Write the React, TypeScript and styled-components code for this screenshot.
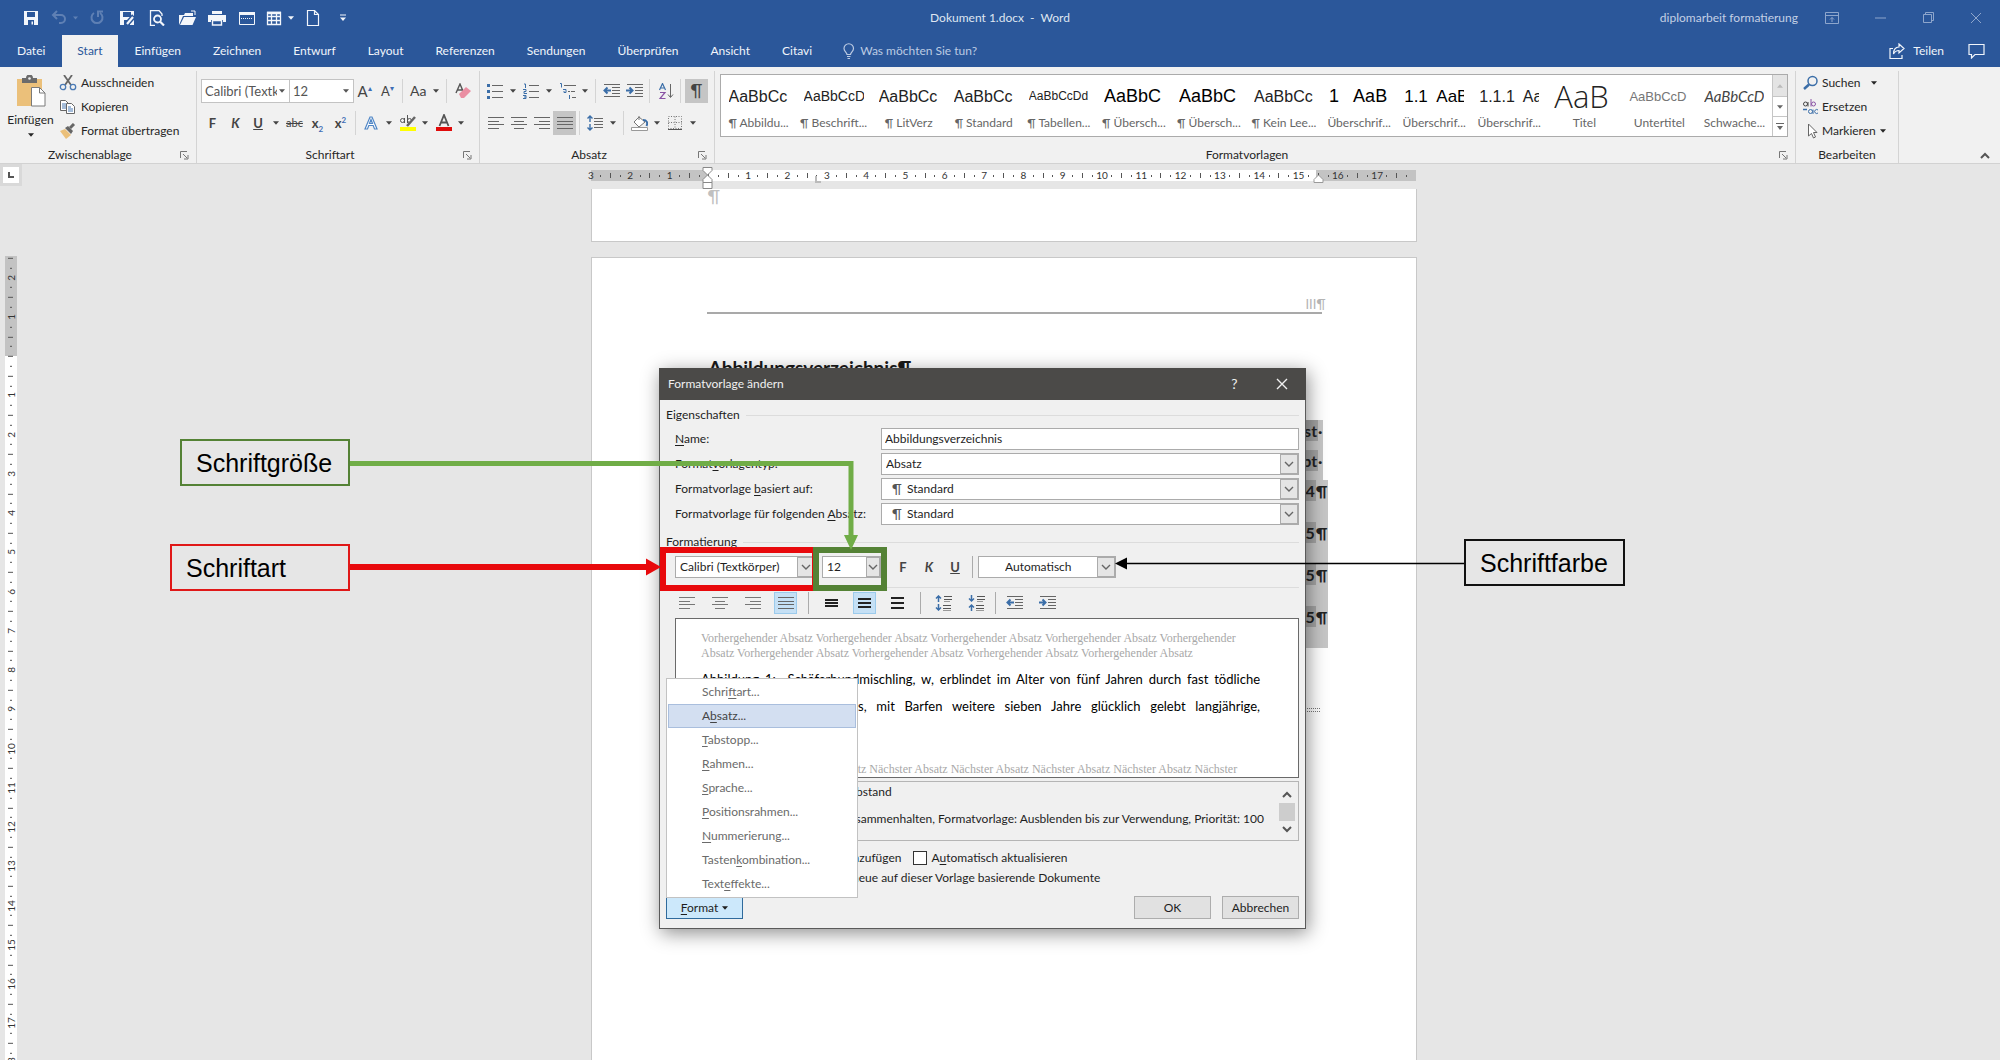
import React from "react";
import styled, { createGlobalStyle, css } from "styled-components";

const UI = `Lato, "Noto Sans", "Liberation Sans", sans-serif`;
const SANS = `"Liberation Sans", Arial, sans-serif`;
const BLUE = "#2b579a";

const Global = createGlobalStyle`
  *, *::before, *::after { box-sizing: border-box; }
  html, body { margin: 0; padding: 0; }
  body { font: 12px/16px ${UI}; color: #262626; background: #e6e6e6; }
  button, input, select { font: inherit; color: inherit; margin: 0; padding: 0; border: 0; background: none; border-radius: 0; }
  select { appearance: none; }
  svg { display: block; flex: none; }
  u { text-underline-offset: 2px; }
`;

const Shell = styled.div`
  height: 100vh;
  display: flex;
  flex-direction: column;
  overflow: hidden;
`;

/* ---------- title bar ---------- */
const TitleBar = styled.header`
  display: grid;
  grid-template-columns: 1fr auto 1fr;
  align-items: center;
  height: 35px;
  flex: none;
  background: ${BLUE};
  color: #dfe6f1;
`;
const QuickAccess = styled.div`
  display: flex;
  padding-left: 16px;
`;
const QuickButton = styled.button<{ $split?: boolean; $dim?: boolean }>`
  width: ${(p) => (p.$split ? 36 : 30)}px;
  height: 30px;
  display: flex;
  align-items: center;
  justify-content: center;
  gap: 6px;
  color: ${(p) => (p.$dim ? "#5f80b4" : "#f3f6fb")};
`;
const DocName = styled.div`
  white-space: pre;
`;
const WindowSide = styled.div`
  display: flex;
  justify-content: flex-end;
  align-items: center;
  color: #c3d0e5;
`;
const UserName = styled.span`
  margin-right: 10px;
`;
const WindowButton = styled.button`
  width: 48px;
  height: 32px;
  display: grid;
  place-items: center;
  color: #8ea6cc;
`;

/* ---------- tabs ---------- */
const TabBar = styled.nav`
  display: flex;
  align-items: stretch;
  gap: 2px;
  height: 32px;
  flex: none;
  padding-left: 2px;
  background: ${BLUE};
  color: #f1f5fb;
`;
const Tab = styled.button<{ $on?: boolean }>`
  padding: 0 15px;
  white-space: nowrap;
  ${(p) => p.$on && css`background: #f1f1f1; color: ${BLUE};`}
`;
const TellMe = styled.button`
  display: flex;
  align-items: center;
  gap: 5px;
  margin-left: 14px;
  color: #bccbe3;
`;
const TabRight = styled.div`
  margin-left: auto;
  display: flex;
  align-items: center;
  gap: 24px;
  padding-right: 15px;
`;
const ShareButton = styled.button`
  display: flex;
  align-items: center;
  gap: 8px;
`;

/* ---------- ribbon ---------- */
const Ribbon = styled.div`
  display: flex;
  height: 97px;
  flex: none;
  padding-top: 4px;
  background: #f1f1f1;
  border-bottom: 1px solid #d2d2d2;
`;
const Group = styled.section<{ $w?: number }>`
  ${(p) => (p.$w ? css`flex: 0 0 ${p.$w}px;` : css`flex: 1; min-width: 0;`)}
  display: flex;
  flex-direction: column;
  justify-content: space-between;
  border-right: 1px solid #d4d4d4;
`;
const GroupBody = styled.div<{ $top?: number; $left?: number; $col?: boolean }>`
  display: flex;
  flex-direction: ${(p) => (p.$col ? "column" : "row")};
  gap: ${(p) => (p.$col ? 8 : 0)}px;
  padding: ${(p) => p.$top ?? 0}px 0 0 ${(p) => p.$left ?? 4}px;
`;
const GroupLabel = styled.div`
  display: flex;
  align-items: center;
  height: 16px;
  & > span { flex: 1; text-align: center; }
  & > button { width: 16px; height: 12px; }
`;
const PasteButton = styled.button`
  width: 57px;
  height: 72px;
  padding-top: 4px;
  display: flex;
  flex-direction: column;
  align-items: center;
  gap: 5px;
`;
const Stack = styled.div`
  display: flex;
  flex-direction: column;
`;
const TextButton = styled.button`
  display: flex;
  align-items: center;
  gap: 4px;
  height: 24px;
  white-space: nowrap;
`;
const ToolRow = styled.div`
  display: flex;
  align-items: center;
  height: 24px;
`;
const Tool = styled.button<{ $split?: boolean; $on?: boolean }>`
  width: ${(p) => (p.$split ? 36 : 23)}px;
  height: 24px;
  display: flex;
  align-items: center;
  justify-content: ${(p) => (p.$split ? "space-between" : "center")};
  padding: ${(p) => (p.$split ? "0 4px 0 3px" : "0")};
  background: ${(p) => (p.$on ? "#c5c5c5" : "transparent")};
  color: #444;
`;
const Letter = styled.span<{ $size?: number; $kind?: "b" | "i" | "u" | "s" }>`
  font-size: ${(p) => p.$size ?? 13}px;
  line-height: 20px;
  text-align: center;
  min-width: 16px;
  font-weight: ${(p) => (p.$kind && p.$kind !== "s" ? 700 : 400)};
  font-style: ${(p) => (p.$kind === "i" ? "italic" : "normal")};
  text-decoration: ${(p) => (p.$kind === "u" ? "underline" : p.$kind === "s" ? "line-through" : "none")};
  & sup, & sub { font-size: 8px; line-height: 0; color: #3e6db5; }
`;
const Sep = styled.span`
  width: 1px;
  height: 24px;
  margin: 0 4px 0 3px;
  background: #d4d4d4;
`;
const RibbonCombo = styled.div<{ $w: number }>`
  position: relative;
  width: ${(p) => p.$w}px;
  height: 24px;
  margin-right: -1px;
  border: 1px solid #c3c3c3;
  background: #fff;
  color: #555;
  & select { width: 100%; height: 22px; padding: 0 12px 0 3px; font-size: 13px; }
  & svg { position: absolute; right: 4px; top: 9px; pointer-events: none; }
`;

/* ---------- style gallery ---------- */
const Gallery = styled.div`
  display: flex;
  height: 63px;
  margin: 3px 7px 0 5px;
  border: 1px solid #ababab;
  background: #fff;
`;
const GalleryItems = styled.div`
  flex: 1;
  min-width: 0;
  display: grid;
  grid-template-columns: repeat(14, minmax(0, 1fr));
  overflow: hidden;
`;
const StyleItem = styled.button`
  display: flex;
  flex-direction: column;
  align-items: center;
  min-width: 0;
  color: #666;
`;
const Sample = styled.span<{ $size: number; $light?: boolean; $grey?: boolean; $italic?: boolean; $heavy?: boolean }>`
  width: 60px;
  height: 40px;
  overflow: hidden;
  white-space: pre;
  text-align: left;
  font-family: ${(p) => (p.$light ? `"Open Sans", sans-serif` : p.$italic ? UI : SANS)};
  font-size: ${(p) => p.$size}px;
  line-height: 43px;
  font-weight: ${(p) => (p.$light ? 300 : 400)};
  font-style: ${(p) => (p.$italic ? "italic" : "normal")};
  color: ${(p) => (p.$grey ? "#767676" : p.$italic ? "#444" : p.$heavy ? "#000" : "#222")};
`;
const GalleryScroll = styled.div`
  width: 15px;
  display: grid;
  grid-template-rows: 22px 20px 1fr;
  border-left: 1px solid #c6c6c6;
  & button { display: grid; place-items: center; color: #666; border-bottom: 1px solid #c6c6c6; }
  & button:first-child { background: #e4e4e4; color: #bbb; }
  & button:last-child { border-bottom: 0; }
`;
const CollapseSide = styled.div`
  flex: 0 0 101px;
  display: flex;
  align-items: flex-end;
  justify-content: flex-end;
  padding: 0 10px 4px 0;
  color: #555;
`;

/* ---------- workspace ---------- */
const Workspace = styled.main`
  position: relative;
  flex: 1;
  min-height: 0;
  display: flex;
  padding-right: 15px;
  background: #e6e6e6;
  overflow: hidden;
`;
const RulerColumn = styled.div`
  flex: 0 0 22px;
  display: flex;
  flex-direction: column;
`;
const TabKind = styled.button`
  flex: none;
  width: 22px;
  height: 22px;
  display: grid;
  place-items: center;
  background: #d9d9d9;
  color: #555;
  & > span { width: 16px; height: 16px; background: #fff; display: grid; place-items: center; }
`;
const VRuler = styled.div`
  width: 12px;
  flex: 1;
  min-height: 0;
  margin: 70px 0 0 5px;
  background: linear-gradient(#c3c3c3 100px, #fff 100px);
`;
const VMarks = styled.div`
  display: flex;
  flex-direction: column;
  margin-top: -3px;
`;
const HRuler = styled.div`
  width: 825px;
  height: 11px;
  flex: none;
  position: relative;
  margin: 6px 0 8px;
  background: linear-gradient(90deg, #c3c3c3 116px, #fff 116px, #fff 725px, #c3c3c3 725px);
`;
const HMarks = styled.div`
  display: flex;
  width: 100%;
  margin-left: -5px;
`;
const Mark = styled.span<{ $kind: "num" | "tick" | "dot"; $v?: boolean }>`
  ${(p) => (p.$v ? css`height: calc(825px / 84); width: 12px; writing-mode: vertical-rl; transform: rotate(180deg);` : css`flex: 1 1 0; height: 11px;`)}
  flex-shrink: ${(p) => (p.$v ? 0 : 1)};
  display: flex;
  align-items: center;
  justify-content: center;
  min-width: 0;
  min-height: 0;
  font-size: 10px;
  line-height: 11px;
  color: #333;
  white-space: nowrap;
  &::before {
    content: "";
    display: ${(p) => (p.$kind === "num" ? "none" : "block")};
    background: #555;
    ${(p) => (p.$v
      ? css`height: 1px; width: ${p.$kind === "tick" ? 5 : 2}px;`
      : css`width: 1px; height: ${p.$kind === "tick" ? 5 : 2}px;`)}
  }
`;
const IndentHandle = styled.svg<{ $x: number; $y: number }>`
  position: absolute;
  left: ${(p) => p.$x}px;
  top: ${(p) => p.$y}px;
  z-index: 1;
`;
const Pages = styled.div`
  flex: 1;
  min-width: 0;
  display: flex;
  flex-direction: column;
  align-items: center;
`;
const Sheet = styled.article<{ $first?: boolean }>`
  width: 826px;
  background: #fff;
  border: 1px solid #c8c8c8;
  ${(p) => (p.$first
    ? css`flex: 0 0 53px; border-top: 0; margin-bottom: 15px; padding-left: 116px; font-size: 18px; line-height: 15px; color: #c0c0c0; overflow: hidden;`
    : css`flex: 1; border-bottom: 0;`)}
`;
const PageHeader = styled.div`
  height: 56px;
  margin: 0 94px 0 115px;
  padding-top: 38px;
  border-bottom: 2px solid #a9a9a9;
  text-align: right;
  font-size: 13px;
  color: #b4b4b4;
  & span { margin-right: -4px; }
`;
const PageTitle = styled.h1`
  margin: 42px 0 0 117px;
  font: 700 19px/24px ${UI};
  color: #1a1a1a;
`;
const Toc = styled.ol`
  list-style: none;
  margin: 40px 0 0 117px;
  padding: 0;
`;
const TocRow = styled.li<{ $tall?: boolean }>`
  display: flex;
  justify-content: flex-end;
  height: ${(p) => (p.$tall ? 42 : 30)}px;
  margin-right: ${(p) => (p.$tall ? 88 : 93)}px;
  background: #c6c6c6;
  font: 700 16px/22px ${UI};
  color: #222;
  & b { width: 24px; height: 21px; padding-right: 1px; text-align: right; background: #a3a3a3; font-weight: inherit; }
`;
const SectionEnd = styled.div`
  height: 4px;
  margin: 60px 96px 0 117px;
  border: dotted #777;
  border-width: 1px 0;
`;

/* ---------- floating layer: dialog and callouts, placed from the page centre ---------- */
const Floating = styled.div<{ $x: number; $y: number }>`
  position: absolute;
  left: calc(50% + ${(p) => p.$x}px);
  top: ${(p) => p.$y}px;
`;
const Dialog = styled(Floating)`
  width: 647px;
  height: 561px;
  background: #f0f0f0;
  border: 1px solid #5a5a5a;
  box-shadow: 2px 4px 18px rgba(0, 0, 0, 0.45);
  z-index: 2;
  color: #1e1e1e;
`;
const DialogTitle = styled.div`
  display: flex;
  align-items: center;
  height: 32px;
  margin: -1px -1px 0;
  padding: 0 1px 0 9px;
  background: #4b4a48;
  color: #f0f0f0;
  & > span { flex: 1; }
  & > button { width: 47px; display: grid; place-items: center; font-size: 14px; }
`;
const DialogBody = styled.div`
  padding: 7px 6px 0;
`;
const Legend = styled.div`
  display: flex;
  align-items: center;
  gap: 6px;
  height: 16px;
  &::after { content: ""; flex: 1; height: 1px; background: #dcdcdc; }
`;
const Fields = styled.div`
  display: grid;
  grid-template-columns: 206px 1fr;
  grid-auto-rows: 22px;
  row-gap: 3px;
  margin: 5px 0 9px 9px;
  & label { line-height: 22px; white-space: nowrap; }
  & > input { border: 1px solid #ababab; background: #fff; padding: 0 3px; }
`;
const Combo = styled.div<{ $w?: number; $pad?: number }>`
  position: relative;
  ${(p) => p.$w && css`width: ${p.$w}px;`}
  height: 22px;
  border: 1px solid #ababab;
  background: #fff;
  & select { width: 100%; height: 20px; padding: 0 18px 0 ${(p) => p.$pad ?? 4}px; }
  & > span { position: absolute; right: 0; top: 0; width: ${(p) => (p.$w && p.$w < 100 ? 14 : 18)}px; height: 20px; display: grid; place-items: center; background: #e5e5e5; border: 1px solid #ababab; color: #666; pointer-events: none; }
  & > i { position: absolute; left: 10px; top: 2px; font-style: normal; font-size: 14px; color: #555; }
`;
const FormatRow = styled.div`
  display: flex;
  align-items: center;
  gap: 6px;
  margin: 6px 0 0 9px;
`;
const FormatButtons = styled.div`
  display: flex;
  padding-left: 3px;
`;
const FormatButton = styled.button`
  width: 26px;
  height: 22px;
  color: #444;
`;
const RowSep = styled.span`
  width: 1px;
  height: 22px;
  margin: 0 -1px 0 -2px;
  background: #ababab;
`;
const AlignRow = styled.div`
  display: flex;
  align-items: center;
  gap: 10px;
  height: 31px;
  margin-top: 9px;
  padding-left: 9px;
  border-top: 1px solid #dcdcdc;
`;
const AlignButton = styled.button<{ $on?: boolean }>`
  width: 23px;
  height: 22px;
  display: grid;
  place-items: center;
  border: 1px solid ${(p) => (p.$on ? "#9ccbec" : "transparent")};
  background: ${(p) => (p.$on ? "#c5e0f5" : "transparent")};
`;
const AlignSep = styled.span<{ $tight?: boolean }>`
  width: 1px;
  height: 22px;
  margin: 0 ${(p) => (p.$tight ? -3 : 1)}px;
  background: #ababab;
`;
const Preview = styled.div`
  height: 160px;
  margin-left: 9px;
  padding: 12px 38px 0 25px;
  border: 1px solid #6a6a6a;
  background: #fff;
  overflow: hidden;
`;
const Ghost = styled.p<{ $end?: boolean }>`
  margin: ${(p) => (p.$end ? "42px 0 0" : "0")};
  padding-left: ${(p) => (p.$end ? 132 : 0)}px;
  font: 12px/15px "Liberation Serif", serif;
  color: #a8a8a8;
  white-space: nowrap;
`;
const Body = styled.p<{ $indent?: boolean }>`
  margin: ${(p) => (p.$indent ? "0" : "5px 0 0")};
  padding-left: ${(p) => (p.$indent ? 157 : 0)}px;
  font-size: 13px;
  line-height: 27px;
  text-align: justify;
  text-align-last: justify;
  white-space: nowrap;
  color: #000;
`;
const Description = styled.div`
  display: flex;
  height: 60px;
  margin: 3px 0 0 9px;
  border: 1px solid #b5b5b5;
`;
const DescriptionText = styled.div`
  flex: 1;
  min-width: 0;
  display: flex;
  flex-direction: column;
  gap: 9px;
  padding: 1px 14px 0 120px;
  line-height: 18px;
  white-space: nowrap;
  & div:first-child { padding-left: 52px; }
  & div:last-child { text-align: right; }
`;
const ScrollBar = styled.div`
  width: 20px;
  flex: none;
  display: flex;
  flex-direction: column;
  align-items: center;
  justify-content: space-between;
  padding: 9px 2px 7px 0;
  color: #555;
  & > span { width: 16px; height: 18px; background: #cdcdcd; }
`;
const CheckRow = styled.div<{ $last?: boolean }>`
  display: flex;
  align-items: center;
  height: 20px;
  margin-top: ${(p) => (p.$last ? 0 : 7)}px;
  padding-left: ${(p) => (p.$last ? 186 : 177)}px;
  white-space: nowrap;
  & label { display: flex; align-items: center; }
  & input { appearance: none; width: 14px; height: 14px; margin: 0 4px 0 12px; border: 1px solid #333; background: #fff; }
`;
const DialogFooter = styled.div`
  display: flex;
  gap: 11px;
  margin-top: 8px;
`;
const PushButton = styled.button<{ $hot?: boolean }>`
  width: 77px;
  height: 23px;
  border: 1px solid ${(p) => (p.$hot ? "#2f6a9c" : "#adadad")};
  background: ${(p) => (p.$hot ? "#cce8fb" : "#e1e1e1")};
  ${(p) => p.$hot && css`margin-right: auto; display: flex; align-items: center; justify-content: center; gap: 4px;`}
`;
const Menu = styled.ul`
  position: absolute;
  left: 6px;
  bottom: 30px;
  width: 192px;
  margin: 0;
  padding: 1px;
  list-style: none;
  background: #fff;
  border: 1px solid #c2c2c2;
  & button { display: block; width: 100%; height: 24px; padding-left: 33px; text-align: left; color: #6a6a6a; border: 1px solid transparent; }
`;
const HotItem = styled.li`
  & button { background: #d3dff1; border-color: #a9bedd; color: #444; }
`;
const Arrows = styled(Floating).attrs({ as: "svg" })`
  z-index: 3;
  pointer-events: none;
`;
const Callout = styled(Floating)<{ $w: number; $line: string }>`
  width: ${(p) => p.$w}px;
  height: 47px;
  padding-left: 14px;
  border: 2px solid ${(p) => p.$line};
  font: 25px/44px ${SANS};
  color: #000;
`;
const Frame = styled(Floating)<{ $w: number; $line: string }>`
  width: ${(p) => p.$w}px;
  height: 44px;
  border: 6px solid ${(p) => p.$line};
  z-index: 3;
  pointer-events: none;
`;

/* ---------- icons ---------- */
const Caret = ({ w = 7 }: { w?: number }) => (
  <svg width={w} height="4" viewBox="0 0 7 4"><path d="M0 0h7L3.5 4z" fill="currentColor" /></svg>
);
const Chevron = ({ up, heavy }: { up?: boolean; heavy?: boolean }) => (
  <svg width="10" height="7" viewBox="0 0 10 7">
    <path d={up ? "M1 6l4-4 4 4" : "M1 1l4 4 4-4"} fill="none" stroke="currentColor" strokeWidth={heavy ? 2 : 1.4} />
  </svg>
);
const Launcher = () => (
  <svg width="9" height="9" viewBox="0 0 9 9" fill="none" stroke="#777"><path d="M.5 7V.5H7M3 3l4 4M8 4v4H4" /></svg>
);
const I = ({ children, w = 16, h = 16 }: { children: React.ReactNode; w?: number; h?: number }) => (
  <svg width={w} height={h} viewBox={`0 0 ${w} ${h}`} fill="none" stroke="currentColor">{children}</svg>
);
type Rows = [number, number, number][];
const Lines = ({ rows, c = "#666", w = 16, sw = 1 }: { rows: Rows; c?: string; w?: number; sw?: number }) => (
  <I w={w}>{rows.map(([x, y, l], i) => <path key={i} d={`M${x} ${y}h${l}`} stroke={c} strokeWidth={sw} />)}</I>
);
const SaveIcon = ({ edit }: { edit?: boolean }) => (
  <I><path d="M1 1h14v14H1z" fill="currentColor" stroke="none" /><path d="M4 2h8v5H4zM5 10h6v5H5z" fill={BLUE} stroke="none" /><path d="M8.5 11.5h1.5v3H8.5z" fill="currentColor" stroke="none" />
    {edit && <><path d="M7 15L15 6" stroke={BLUE} strokeWidth="5" /><path d="M8 14l6-7" strokeWidth="2.2" /></>}
  </I>
);
const leftRows: Rows = [[0, 2.5, 16], [0, 6.5, 11], [0, 9.5, 16], [0, 13.5, 11]];
const centerRows: Rows = [[0, 2.5, 16], [3, 6.5, 10], [0, 9.5, 16], [3, 13.5, 10]];
const rightRows: Rows = [[0, 2.5, 16], [5, 6.5, 11], [0, 9.5, 16], [5, 13.5, 11]];
const justRows: Rows = [[0, 2.5, 16], [0, 6.5, 16], [0, 9.5, 16], [0, 13.5, 16]];
const Indent = ({ inward }: { inward?: boolean }) => (
  <I w={17}>
    <path d="M1 1.5h16M9 4.5h8M9 7.5h8M9 10.5h8M1 13.5h16" stroke="#666" />
    <path d={inward ? "M0 7.5h6M3.500 4.500l3 3-3 3" : "M8 7.5H2M4.500 4.500l-3 3 3 3"} stroke="#3b6ea8" strokeWidth="2" />
  </I>
);
const ParaGap = ({ closer }: { closer?: boolean }) => (
  <I w={17}>
    <path d="M9 1.500h8M9 4.500h8M8 10.500h8M8 13.500h8" stroke="#555" /><path d="M9 6.500h6M8 15.500h8" stroke="#999" />
    <path d={closer ? "M3.500 0v6M1 3.500l2.500 2.500L6 3.500M3.500 16v-6M1 12.500L3.500 10 6 12.500" : "M3.500 7V1M1 3.500L3.500 1 6 3.500M3.500 9v6M1 12.500L3.500 15 6 12.500"} stroke="#3b6ea8" strokeWidth="1.500" />
  </I>
);

const tabs = ["Datei", "Start", "Einfügen", "Zeichnen", "Entwurf", "Layout", "Referenzen", "Sendungen", "Überprüfen", "Ansicht", "Citavi"];

type Style = { name: string; text: string; size: number; light?: boolean; heavy?: boolean; grey?: boolean; italic?: boolean };
const styles: Style[] = [
  { name: "¶ Abbildu...", text: "AaBbCc", size: 16 },
  { name: "¶ Beschrift...", text: "AaBbCcD", size: 14 },
  { name: "¶ LitVerz", text: "AaBbCc", size: 16 },
  { name: "¶ Standard", text: "AaBbCc", size: 16 },
  { name: "¶ Tabellen...", text: "AaBbCcDd", size: 12 },
  { name: "¶ Übersch...", text: "AaBbC", size: 18, heavy: true },
  { name: "¶ Übersch...", text: "AaBbC", size: 18, heavy: true },
  { name: "¶ Kein Lee...", text: "AaBbCc", size: 16 },
  { name: "Überschrif...", text: "1   AaB", size: 18, heavy: true },
  { name: "Überschrif...", text: "1.1  AaB", size: 17, heavy: true },
  { name: "Überschrif...", text: "1.1.1  Aa", size: 16 },
  { name: "Titel", text: "AaB", size: 31, light: true },
  { name: "Untertitel", text: "AaBbCcD", size: 13, grey: true },
  { name: "Schwache...", text: "AaBbCcD", size: 15, italic: true },
];

const markOf = (n: number) => (n === 0 ? "tick" : n % 4 === 0 ? "num" : n % 2 === 0 ? "tick" : "dot");
const Scale = ({ from, to, vertical }: { from: number; to: number; vertical?: boolean }) => (
  <>
    {Array.from({ length: to - from + 1 }, (_, i) => from + i).map((n) => {
      const kind = markOf(n);
      return <Mark key={n} $kind={kind} $v={vertical}>{kind === "num" ? Math.abs(n / 4) : null}</Mark>;
    })}
  </>
);

const menuItems: [string, string, string][] = [
  ["Schri", "f", "tart..."], ["A", "b", "satz..."], ["", "T", "abstopp..."], ["", "R", "ahmen..."], ["", "S", "prache..."],
  ["", "P", "ositionsrahmen..."], ["", "N", "ummerierung..."], ["Tasten", "k", "ombination..."], ["Text", "e", "ffekte..."],
];

const DropArrow = () => <span><Chevron /></span>;

function RibbonBar() {
  return (
    <Ribbon>
      <Group $w={197}>
        <GroupBody $left={2}>
          <PasteButton>
            <I w={30} h={32}>
              <path d="M1 4h25v27H1z" fill="#ebc07a" stroke="none" />
              <path d="M6 3h4a3.500 3.500 0 0 1 7 0h4v5H6z" fill="#6b6b6b" stroke="none" /><circle cx="13.500" cy="3.500" r="1.300" fill="#f1f1f1" stroke="none" />
              <path d="M15.500 12.500h8l5.500 5.500v13H15.500z" fill="#fff" stroke="#7a7a7a" /><path d="M23.500 12.500V18H29" stroke="#7a7a7a" />
            </I>
            <span>Einfügen</span>
            <Caret w={6} />
          </PasteButton>
          <Stack>
            <TextButton>
              <I w={18}><path d="M5 0l7 10M13 0L6 10" stroke="#666" strokeWidth="1.800" /><circle cx="4" cy="12" r="2.700" stroke="#4a7ab5" strokeWidth="1.300" /><circle cx="14" cy="12" r="2.700" stroke="#4a7ab5" strokeWidth="1.300" /></I>
              Ausschneiden
            </TextButton>
            <TextButton>
              <I w={18}><path d="M1.500 1.500h5l3 3v7h-8z" fill="#fff" stroke="#666" /><path d="M3 5h4M3 7h4M3 9h4" stroke="#4a7ab5" /><path d="M7.500 4.500h5l3 3v7h-8z" fill="#fff" stroke="#666" /><path d="M9 8h3M9 10h5M9 12h5" stroke="#4a7ab5" /></I>
              Kopieren
            </TextButton>
            <TextButton>
              <I w={18}><path d="M1 8l5-2 6 6-5 4z" fill="#ebc07a" stroke="none" /><path d="M6 5l3-2 5 5-2 3z" fill="#666" stroke="none" /><path d="M11 5l4-4" stroke="#666" strokeWidth="3" /></I>
              Format übertragen
            </TextButton>
          </Stack>
        </GroupBody>
        <GroupLabel><span>Zwischenablage</span><button aria-label="Zwischenablage öffnen"><Launcher /></button></GroupLabel>
      </Group>

      <Group $w={283}>
        <GroupBody $top={8} $col>
          <ToolRow>
            <RibbonCombo $w={89}><select aria-label="Schriftart"><option>Calibri (Textk</option></select><Caret w={6} /></RibbonCombo>
            <RibbonCombo $w={65}><select aria-label="Schriftgrad"><option>12</option></select><Caret w={6} /></RibbonCombo>
            <Tool><Letter $size={15}>A<sup>▴</sup></Letter></Tool>
            <Tool><Letter>A<sup>▾</sup></Letter></Tool>
            <Sep />
            <Tool $split><Letter $size={14}>Aa</Letter><Caret w={6} /></Tool>
            <Sep />
            <Tool><I><path d="M1 10L5 1l3 7M2.500 7h5" stroke="#555" strokeWidth="1.400" /><path d="M4 11l7-7 5 4-7 7-3 0z" fill="#ea8fa3" stroke="none" /></I></Tool>
          </ToolRow>
          <ToolRow>
            <Tool><Letter $kind="b">F</Letter></Tool>
            <Tool><Letter $kind="i">K</Letter></Tool>
            <Tool $split><Letter $kind="u">U</Letter><Caret w={6} /></Tool>
            <Tool><Letter $size={11} $kind="s">abc</Letter></Tool>
            <Tool><Letter $kind="b">x<sub>2</sub></Letter></Tool>
            <Tool><Letter $kind="b">x<sup>2</sup></Letter></Tool>
            <Sep />
            <Tool $split><I><path d="M2 14L7 2h2l5 12h-2.500l-1.300-3.500H5.800L4.500 14zM6.500 8.500h3L8 4.500z" fill="#fff" stroke="#4f86c6" strokeWidth="1.200" /></I><Caret w={6} /></Tool>
            <Tool $split><I w={18} h={18}><path d="M1 13h16v4H1z" fill="#ff0" stroke="none" /><circle cx="3.500" cy="6.500" r="2" stroke="#555" /><path d="M5.500 4v5M8.500 1v8" stroke="#555" /><circle cx="10.500" cy="6.500" r="2" stroke="#555" /><path d="M8 12l8-9" stroke="#666" strokeWidth="2.500" /></I><Caret w={6} /></Tool>
            <Tool $split><I w={18} h={18}><path d="M1 13h16v4H1z" fill="#e00b0b" stroke="none" /><path d="M4.500 12L9 1l4.500 11M6 8.500h6" stroke="#555" strokeWidth="1.800" /></I><Caret w={6} /></Tool>
          </ToolRow>
        </GroupBody>
        <GroupLabel><span>Schriftart</span><button aria-label="Schriftart öffnen"><Launcher /></button></GroupLabel>
      </Group>

      <Group $w={235}>
        <GroupBody $top={8} $col>
          <ToolRow>
            <Tool $split><I><path d="M5 2.500h11M5 8.500h11M5 14.500h11" stroke="#666" /><path d="M0 2.500h3M0 8.500h3M0 14.500h3" stroke="#3b6ea8" strokeWidth="3" /></I><Caret w={6} /></Tool>
            <Tool $split><I><path d="M6 2.500h10M6 8.500h10M6 14.500h10" stroke="#666" /><path d="M1 1h1.500v4M0 6.500h3v2H1v2h3M0 12.500h3v3H0M1 14h2" stroke="#3b6ea8" /></I><Caret w={6} /></Tool>
            <Tool $split><I w={17}><path d="M5 2.500h12M9 8.500h2M12 8.500h4M13 14.500h4" stroke="#666" /><path d="M1 .5h1.500v4M4 6.500h3v3H5v-1.500M10.500 12v4" stroke="#3b6ea8" /></I><Caret w={6} /></Tool>
            <Sep />
            <Tool><Indent /></Tool>
            <Tool><Indent inward /></Tool>
            <Sep />
            <Tool><I><path d="M1.500 7L4.500.5 7.500 7M2.500 5h4" stroke="#3b6ea8" strokeWidth="1.200" /><path d="M2 9.500h5l-5 6h5.500" stroke="#8a54a5" strokeWidth="1.200" /><path d="M12.500 1v13M10 11.500l2.500 3 2.500-3" stroke="#666" /></I></Tool>
            <Sep />
            <Tool $on><Letter $size={17}>¶</Letter></Tool>
          </ToolRow>
          <ToolRow>
            <Tool><Lines rows={leftRows} /></Tool>
            <Tool><Lines rows={centerRows} /></Tool>
            <Tool><Lines rows={rightRows} /></Tool>
            <Tool $on><Lines rows={justRows} /></Tool>
            <Sep />
            <Tool $split><I><path d="M7 3.500h9M7 6.500h9M7 9.500h9M7 12.500h9" stroke="#666" /><path d="M3 7V1M.5 3.500L3 1l2.500 2.500M3 9v6M.5 12.500L3 15l2.500-2.500" stroke="#3b6ea8" strokeWidth="1.400" /></I><Caret w={6} /></Tool>
            <Sep />
            <Tool $split><I w={17}><path d="M3 7l5-5 6 5-6 5z" stroke="#777" fill="#fff" /><path d="M8 5V1" stroke="#777" /><path d="M12 5c4 0 5 3 3.500 6" stroke="#3b6ea8" strokeWidth="2" /><path d="M.5 12.500h16v3H.5z" fill="#fff" stroke="#999" /></I><Caret w={6} /></Tool>
            <Tool $split><I><path d="M1.500 1.500h13v12h-13zM8 1.500v12M1.500 7.500h13" stroke="#777" strokeDasharray="1 1.500" /><path d="M1 14.500h14" stroke="#555" /></I><Caret w={6} /></Tool>
          </ToolRow>
        </GroupBody>
        <GroupLabel><span>Absatz</span><button aria-label="Absatz öffnen"><Launcher /></button></GroupLabel>
      </Group>

      <Group>
        <Gallery>
          <GalleryItems>
            {styles.map((s, i) => (
              <StyleItem key={i}>
                <Sample $size={s.size} $light={s.light} $heavy={s.heavy} $grey={s.grey} $italic={s.italic}>{s.text}</Sample>
                <span>{s.name}</span>
              </StyleItem>
            ))}
          </GalleryItems>
          <GalleryScroll>
            <button aria-label="Zeile nach oben"><svg width="6" height="4" viewBox="0 0 7 4"><path d="M0 4h7L3.500 0z" fill="currentColor" /></svg></button>
            <button aria-label="Zeile nach unten"><Caret w={6} /></button>
            <button aria-label="Weitere"><I w={8} h={8}><path d="M0 .5h8" /><path d="M1 3h6L4 7z" fill="currentColor" stroke="none" /></I></button>
          </GalleryScroll>
        </Gallery>
        <GroupLabel><span>Formatvorlagen</span><button aria-label="Formatvorlagen öffnen"><Launcher /></button></GroupLabel>
      </Group>

      <Group $w={103}>
        <GroupBody $left={7}>
          <Stack>
            <TextButton>
              <I w={15}><circle cx="9.500" cy="6" r="4.500" stroke="#3b6ea8" strokeWidth="1.500" /><path d="M6 9.500L1 14" stroke="#3b6ea8" strokeWidth="2.500" /></I>
              Suchen&nbsp;&nbsp;<Caret w={6} />
            </TextButton>
            <TextButton>
              <I w={15}><circle cx="2.500" cy="5" r="2" stroke="#444" /><path d="M5 3v4.500" stroke="#444" /><path d="M8 0v7.500" stroke="#8a54a5" /><circle cx="10.500" cy="5" r="2" stroke="#8a54a5" /><path d="M0 10.500h4" stroke="#3b6ea8" strokeWidth="1.500" /><circle cx="7.500" cy="12.500" r="2" stroke="#3b6ea8" /><path d="M10 10.500V15M15 11a2 2 0 1 0 0 3" stroke="#3b6ea8" /></I>
              Ersetzen
            </TextButton>
            <TextButton>
              <I w={15}><path d="M5.500 1v12l3-2.500 2 4.500 2-1-2-4.500h3.500z" fill="#fff" stroke="#666" /></I>
              Markieren<Caret w={6} />
            </TextButton>
          </Stack>
        </GroupBody>
        <GroupLabel><span>Bearbeiten</span></GroupLabel>
      </Group>
      <CollapseSide><button aria-label="Menüband reduzieren"><Chevron up heavy /></button></CollapseSide>
    </Ribbon>
  );
}

function StyleDialog() {
  return (
    <Dialog $x={-341} $y={204} role="dialog" aria-label="Formatvorlage ändern">
      <DialogTitle>
        <span>Formatvorlage ändern</span>
        <button>?</button>
        <button aria-label="Schließen"><I w={12} h={12}><path d="M1 1l10 10M11 1L1 11" strokeWidth="1.400" /></I></button>
      </DialogTitle>
      <DialogBody>
        <Legend>Eigenschaften</Legend>
        <Fields>
          <label htmlFor="name"><u>N</u>ame:</label>
          <input id="name" defaultValue="Abbildungsverzeichnis" />
          <label htmlFor="type">Format<u>v</u>orlagentyp:</label>
          <Combo><select id="type"><option>Absatz</option></select><DropArrow /></Combo>
          <label htmlFor="base">Formatvorlage <u>b</u>asiert auf:</label>
          <Combo $pad={25}><i>¶</i><select id="base"><option>Standard</option></select><DropArrow /></Combo>
          <label htmlFor="next">Formatvorlage für folgenden <u>A</u>bsatz:</label>
          <Combo $pad={25}><i>¶</i><select id="next"><option>Standard</option></select><DropArrow /></Combo>
        </Fields>
        <Legend>Formatierung</Legend>
        <FormatRow>
          <Combo $w={141}><select aria-label="Schriftart"><option>Calibri (Textkörper)</option></select><DropArrow /></Combo>
          <Combo $w={59}><select aria-label="Schriftgröße"><option>12</option></select><DropArrow /></Combo>
          <FormatButtons>
            <FormatButton><Letter $kind="b">F</Letter></FormatButton>
            <FormatButton><Letter $kind="i">K</Letter></FormatButton>
            <FormatButton><Letter $kind="u">U</Letter></FormatButton>
          </FormatButtons>
          <RowSep />
          <Combo $w={138} $pad={26}><select aria-label="Schriftfarbe"><option>Automatisch</option></select><DropArrow /></Combo>
        </FormatRow>
        <AlignRow>
          <AlignButton aria-label="Linksbündig"><Lines rows={leftRows} c="#777" /></AlignButton>
          <AlignButton aria-label="Zentriert"><Lines rows={centerRows} c="#777" /></AlignButton>
          <AlignButton aria-label="Rechtsbündig"><Lines rows={rightRows} c="#777" /></AlignButton>
          <AlignButton $on aria-label="Blocksatz"><Lines rows={justRows} c="#666" /></AlignButton>
          <AlignSep />
          <AlignButton aria-label="Einfach"><Lines w={13} sw={2} c="#222" rows={[[0, 5, 13], [0, 8, 13], [0, 11, 13]]} /></AlignButton>
          <AlignButton $on aria-label="1,5 Zeilen"><Lines w={13} sw={2} c="#222" rows={[[0, 4, 13], [0, 8, 13], [0, 12, 13]]} /></AlignButton>
          <AlignButton aria-label="Doppelt"><Lines w={13} sw={2} c="#222" rows={[[0, 3, 13], [0, 8, 13], [0, 13, 13]]} /></AlignButton>
          <AlignSep />
          <AlignButton aria-label="Abstand vergrößern"><ParaGap /></AlignButton>
          <AlignButton aria-label="Abstand verkleinern"><ParaGap closer /></AlignButton>
          <AlignSep $tight />
          <AlignButton aria-label="Einzug verkleinern"><Indent /></AlignButton>
          <AlignButton aria-label="Einzug vergrößern"><Indent inward /></AlignButton>
        </AlignRow>
        <Preview>
          <Ghost>Vorhergehender Absatz Vorhergehender Absatz Vorhergehender Absatz Vorhergehender Absatz Vorhergehender</Ghost>
          <Ghost>Absatz Vorhergehender Absatz Vorhergehender Absatz Vorhergehender Absatz Vorhergehender Absatz</Ghost>
          <Body>Abbildung 1:&nbsp; Schäferhundmischling, w, erblindet im Alter von fünf Jahren durch fast tödliche</Body>
          <Body $indent>s, mit Barfen weitere sieben Jahre glücklich gelebt langjährige,</Body>
          <Ghost $end>Absatz Nächster Absatz Nächster Absatz Nächster Absatz Nächster Absatz Nächster</Ghost>
        </Preview>
        <Description>
          <DescriptionText><div>Abstand</div><div>zusammenhalten, Formatvorlage: Ausblenden bis zur Verwendung, Priorität: 100</div></DescriptionText>
          <ScrollBar><Chevron up heavy /><span /><Chevron heavy /></ScrollBar>
        </Description>
        <CheckRow>
          <span>hinzufügen</span>
          <label><input type="checkbox" />A<u>u</u>tomatisch aktualisieren</label>
        </CheckRow>
        <CheckRow $last><span>neue auf dieser Vorlage basierende Dokumente</span></CheckRow>
        <DialogFooter>
          <PushButton $hot><span><u>F</u>ormat</span><Caret w={6} /></PushButton>
          <PushButton>OK</PushButton>
          <PushButton>Abbrechen</PushButton>
        </DialogFooter>
      </DialogBody>
      <Menu>
        {menuItems.map(([a, k, b]) => {
          const Item = a + k + b === "Absatz..." ? HotItem : "li";
          return <Item key={a + k + b}><button>{a}<u>{k}</u>{b}</button></Item>;
        })}
      </Menu>
    </Dialog>
  );
}

export default function App() {
  return (
    <Shell>
      <Global />
      <TitleBar>
        <QuickAccess>
          <QuickButton aria-label="Speichern"><SaveIcon /></QuickButton>
          <QuickButton $split $dim aria-label="Rückgängig"><I><path d="M6 1L2 5l4 4M2.500 5H10a4 4 0 0 1 0 8H8" strokeWidth="2" /></I><Caret w={5} /></QuickButton>
          <QuickButton $dim aria-label="Wiederholen"><I><path d="M5 3a5.500 5.500 0 1 0 6 0M9 7V1.500h5" strokeWidth="2" /></I></QuickButton>
          <QuickButton aria-label="Speichern unter"><SaveIcon edit /></QuickButton>
          <QuickButton aria-label="Seitenansicht"><I><path d="M13 6V4L10 .5H1.500v15H6" strokeWidth="1.300" /><circle cx="8.500" cy="9" r="3.500" strokeWidth="1.800" /><path d="M11 11.500l4 4" strokeWidth="2.200" /></I></QuickButton>
          <QuickButton aria-label="Öffnen"><I w={18}><path d="M1 15V5h5l1-2h8v3H5zM6 7h12l-3.500 8H2z" fill="currentColor" stroke="none" /><path d="M13 1h4v4" strokeWidth="1" /></I></QuickButton>
          <QuickButton aria-label="Drucken"><I w={18}><path d="M4 1h10v3H4zM0 5h18v7h-3v-2H3v2H0z" fill="currentColor" stroke="none" /><path d="M4.500 10.500h9v4.500h-9z" strokeWidth="1.400" /></I></QuickButton>
          <QuickButton aria-label="Umbruch"><I><path d="M.5 2.500h15v12H.5z" /><path d="M0 3.500h16" strokeWidth="3" /><path d="M2 8.500h12" strokeDasharray="1 1" /></I></QuickButton>
          <QuickButton $split aria-label="Tabelle"><I><path d="M1.500 2.500h13v12h-13zM1 6.500h14M1 10.500h14M5.500 3v12M10.500 3v12" strokeWidth="1.300" /><path d="M1 3h14" strokeWidth="2.500" /></I><Caret w={6} /></QuickButton>
          <QuickButton aria-label="Neu"><I w={14}><path d="M1.500.5h7l4 4v11h-11zM8.500.5v4h4" strokeWidth="1.200" /></I></QuickButton>
          <QuickButton aria-label="Anpassen"><I w={8} h={8}><path d="M1 1h6" /><path d="M1 3.500h6L4 7z" fill="currentColor" stroke="none" /></I></QuickButton>
        </QuickAccess>
        <DocName>Dokument 1.docx  -  Word</DocName>
        <WindowSide>
          <UserName>diplomarbeit formatierung</UserName>
          <WindowButton aria-label="Menüband-Anzeige"><I w={14} h={12}><path d="M.5.5h13v11H.5zM0 3.500h14M7 10V5.500M5 7.500l2-2 2 2" /></I></WindowButton>
          <WindowButton aria-label="Minimieren"><I w={11} h={2}><path d="M0 1h11" /></I></WindowButton>
          <WindowButton aria-label="Verkleinern"><I w={11} h={11}><path d="M.5 2.500h8v8h-8zM2.500 2.500v-2h8v8h-2" /></I></WindowButton>
          <WindowButton aria-label="Schließen"><I w={12} h={12}><path d="M1 1l10 10M11 1L1 11" /></I></WindowButton>
        </WindowSide>
      </TitleBar>
      <TabBar>
        {tabs.map((t) => <Tab key={t} $on={t === "Start"}>{t}</Tab>)}
        <TellMe>
          <I w={12}><path d="M4 11.500c0-2-3-3-3-6a4.500 4.500 0 0 1 9.500 0c0 3-3 4-3 6zM4 13.500h3.500M4.500 15.500h2.500" strokeWidth="1.200" /></I>
          Was möchten Sie tun?
        </TellMe>
        <TabRight>
          <ShareButton>
            <I><path d="M4 5.500H1v10h12V12" strokeWidth="1.200" /><path d="M10 1l5 4.500-5 4.500V7.500C7 7.500 5.500 9 4.500 11 4.500 7 6.500 4 10 4z" strokeWidth="1.200" /></I>
            Teilen
          </ShareButton>
          <button aria-label="Kommentare"><I w={17}><path d="M1 1.500h15v10H7l-3.500 3.500v-3.500H1z" strokeWidth="1.200" /></I></button>
        </TabRight>
      </TabBar>
      <RibbonBar />
      <Workspace>
        <RulerColumn>
          <TabKind aria-label="Tabstopp-Art"><span><I w={6} h={6}><path d="M1 0v5h5" strokeWidth="2" /></I></span></TabKind>
          <VRuler><VMarks><Scale from={-10} to={72} vertical /></VMarks></VRuler>
        </RulerColumn>
        <Pages>
          <HRuler>
            <HMarks><Scale from={-12} to={71} /></HMarks>
            <IndentHandle $x={111} $y={-3} width="11" height="24" viewBox="0 0 11 24" fill="#fff" stroke="#888">
              <path d="M1 .5h9v3L5.500 8 1 3.500zM1 15.500v-3L5.500 8l4.500 4.500v3zM1 15.500h9v6H1z" />
            </IndentHandle>
            <IndentHandle $x={722} $y={4} width="11" height="9" viewBox="0 0 11 9" fill="#fff" stroke="#999">
              <path d="M1 8.500v-3L5.500 1 10 5.500v3z" />
            </IndentHandle>
            <IndentHandle $x={224} $y={6} width="6" height="7" viewBox="0 0 6 7" fill="none" stroke="#bbb">
              <path d="M1 0v6h5" strokeWidth="2" />
            </IndentHandle>
          </HRuler>
          <Sheet $first>¶</Sheet>
          <Sheet>
            <PageHeader><span>III¶</span></PageHeader>
            <PageTitle>Abbildungsverzeichnis¶</PageTitle>
            <Toc>
              <TocRow><b>st</b>·</TocRow>
              <TocRow><b>pt</b>·</TocRow>
              <TocRow $tall><b>4</b>¶</TocRow>
              <TocRow $tall><b>5</b>¶</TocRow>
              <TocRow $tall><b>5</b>¶</TocRow>
              <TocRow $tall><b>5</b>¶</TocRow>
            </Toc>
            <SectionEnd />
          </Sheet>
        </Pages>
        <StyleDialog />
        <Callout $x={-820} $y={275} $w={170} $line="#548235">Schriftgröße</Callout>
        <Callout $x={-830} $y={380} $w={180} $line="#e01818">Schriftart</Callout>
        <Callout $x={464} $y={375} $w={161} $line="#111">Schriftfarbe</Callout>
        <Frame $x={-340} $y={383} $w={158} $line="#e8090c" />
        <Frame $x={-187} $y={383} $w={74} $line="#548235" />
        <Arrows $x={-650} $y={276} {...({ width: 1116, height: 140, fill: "none" } as object)}>
          <path d="M0 23.500H501V96" stroke="#70ad47" strokeWidth="5" /><path d="M494 95h14l-7 15z" fill="#70ad47" />
          <path d="M0 127h298" stroke="#e8090c" strokeWidth="6" /><path d="M296 118.500v17l15-8.500z" fill="#e8090c" />
          <path d="M776 123.500h338" stroke="#000" strokeWidth="1.500" /><path d="M777 117.500v12l-12-6z" fill="#000" />
        </Arrows>
      </Workspace>
    </Shell>
  );
}
